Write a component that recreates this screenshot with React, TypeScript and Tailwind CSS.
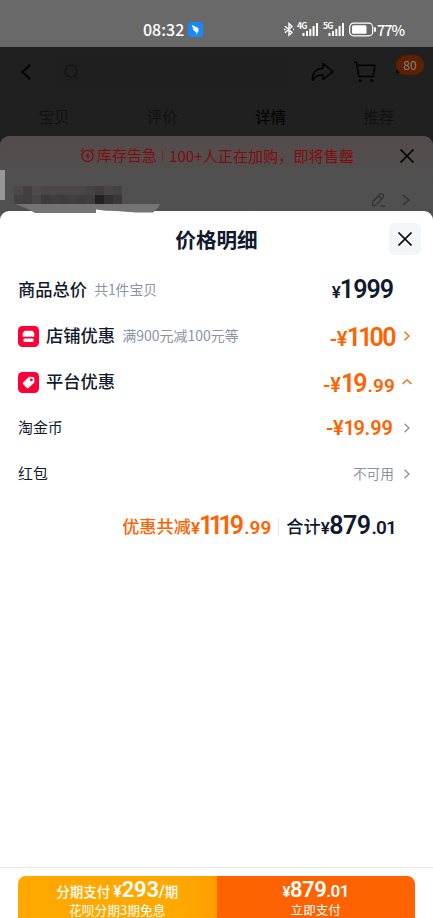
import type { ReactNode } from "react";
import clsx from "clsx";

const TABS = [
  { label: "宝贝", active: false },
  { label: "评价", active: false },
  { label: "详情", active: true },
  { label: "推荐", active: false },
];

// Censored recipient name, one colour per block
const MOSAIC = [
  ["#4b494a", "#434041", "#4d4b4c", "#494748", "#494748", "#494748", "#494748", "#494748", "#464344", "#413e3f", "#474546", "#444243"],
  ["#434142", "#413f40", "#494748", "#3d3b3c", "#3f3d3e", "#3d3b3c", "#403e3f", "#3e3c3d", "#403e3f", "#232122", "#333031", "#3b3839"],
];

function Chevron({ className, up }: { className?: string; up?: boolean }) {
  return (
    <svg
      viewBox="0 0 12 12"
      className={clsx("h-3 w-3 shrink-0", className)}
      fill="none"
      stroke="currentColor"
      strokeWidth="1.3"
    >
      <path d={up ? "M1.5 8 6 3.8 10.5 8" : "M3.5 1.7 8 6 3.5 10.3"} />
    </svg>
  );
}

function CloseIcon() {
  return (
    <svg viewBox="0 0 16 16" className="h-4 w-4" fill="none" stroke="currentColor" strokeWidth="1.7">
      <path d="M1.5 1.5 14.5 14.5M14.5 1.5 1.5 14.5" />
    </svg>
  );
}

function Signal({ label }: { label: string }) {
  return (
    <div className="relative h-[15px] w-[21px]">
      <span className="absolute -left-px -top-px text-[8.5px] font-bold leading-[8px] tracking-[-0.8px]">{label}</span>
      <svg viewBox="0 0 21 15" className="h-[15px] w-[21px]" fill="currentColor">
        <rect x="4.500" y="11" width="2" height="3" />
        <rect x="8" y="9" width="2" height="5" />
        <rect x="11.300" y="7" width="2" height="7" />
        <rect x="14.600" y="4" width="2" height="10" />
        <rect x="18" y="1" width="2" height="13" />
      </svg>
    </div>
  );
}

function StatusBar() {
  return (
    <div className="h-[47px] bg-[#696969] text-white">
      <div className="flex h-full items-start pl-[143px] pt-[20px]">
        <span className="w-[43px] text-[16px] font-medium leading-[18px]">08:32</span>
        <svg viewBox="0 0 15 15" className="ml-[2px] mt-[2px] h-[15px] w-[15px]">
          <rect width="15" height="15" rx="3" fill="#1689fb" />
          <path d="M4 3c2 1 4.500 1.800 6 3 .8.700.4 1.500 0 2.200h1.200L7.600 13l.7-3H6.800l.5-1C5.500 8.500 4.800 7.500 4.700 6.700L6 6.900C4.600 6 4 4.500 4 3z" fill="#fff" />
        </svg>
        <div className="ml-[81px] flex pt-[2px]">
          <svg viewBox="0 0 10 15" className="h-[15px] w-[10px]" fill="none" stroke="currentColor" strokeWidth="1.4">
            <path d="M1 4.300 8 10.500 5 13.200V1.500L8 4.400 1 10.700M9 7.500h1M0 7.500h1.500" />
          </svg>
          <div className="ml-[4px]">
            <Signal label="4G" />
          </div>
          <div className="ml-[5px]">
            <Signal label="5G" />
          </div>
          <svg viewBox="0 0 28 15" className="ml-[4px] h-[15px] w-[28px]">
            <rect x=".7" y="1.200" width="23" height="12.600" rx="3.800" fill="none" stroke="#fff" strokeWidth="1.200" />
            <rect x="3" y="3.300" width="14.500" height="8.400" rx="1.500" fill="#fff" />
            <path d="M26 6v3" stroke="#fff" strokeWidth="1.800" strokeLinecap="round" />
          </svg>
        </div>
        <span className="text-[14.5px] font-medium leading-[19px] tracking-[-1px]">77%</span>
      </div>
    </div>
  );
}

function ProductHeader() {
  return (
    <div className="h-[98px] bg-[#202020] text-black">
      <div className="flex h-[50px] items-center">
        <svg viewBox="0 0 10 16" className="ml-[21px] h-4 w-[10px]" fill="none" stroke="currentColor" strokeWidth="1.8">
          <path d="M9 1 1.500 8 9 15" />
        </svg>
        <div className="ml-[23px] flex h-[34px] w-[238px] items-center rounded-md bg-[#1f1f1f] pl-[10px] text-[#111]">
          <svg viewBox="0 0 16 16" className="h-4 w-4" fill="none" stroke="currentColor" strokeWidth="1.100">
            <circle cx="7" cy="7" r="6" />
            <path d="m11.500 11.500 3 3.300" />
          </svg>
        </div>
        <svg viewBox="0 0 24 20" className="ml-[18px] h-5 w-6" fill="none" stroke="currentColor" strokeWidth="1.500" strokeLinejoin="round">
          <path d="M13 1.500 23 9.700 13 17.500v-4.600C8 12.700 4.600 14.500 2.500 18.300 1.500 11.500 6 6.500 13 6.300z" />
        </svg>
        <svg viewBox="0 0 23 22" className="ml-[20px] h-[22px] w-[22px]" fill="none" stroke="currentColor" strokeWidth="1.500" strokeLinejoin="round">
          <path d="M0 .8h2.700L5 15.800h15L21.800 4H3.200" />
          <circle cx="6.500" cy="20" r="1.500" fill="currentColor" stroke="none" />
          <circle cx="18.500" cy="20" r="1.500" fill="currentColor" stroke="none" />
        </svg>
        <div className="relative ml-[20px] h-5 w-7">
          <span className="absolute left-0 top-[8px] h-[3px] w-[3px] rounded-full bg-black" />
          <span className="absolute -top-[7px] left-0 flex h-[20px] w-[28px] items-center justify-center rounded-full bg-[#5e2000] text-[12px] text-[#858080]">
            80
          </span>
        </div>
      </div>
      <div className="grid h-[40px] grid-cols-4">
        {TABS.map((tab) => (
          <span
            key={tab.label}
            className={clsx("text-center text-[15.5px] leading-[39px]", tab.active ? "text-black" : "text-[#111]")}
          >
            {tab.label}
          </span>
        ))}
      </div>
    </div>
  );
}

function OrderSheet() {
  return (
    <div className="relative -mt-[9px] h-[90px] rounded-t-[9px] bg-linear-to-b from-[#554b4b] from-0% to-[#505050] to-50%">
      <div className="flex h-[39px] items-center pl-[80px] text-[#850b0b]">
        <svg viewBox="0 0 15 15" className="h-[15px] w-[15px]" fill="none" stroke="currentColor" strokeWidth="1.300">
          <circle cx="7.500" cy="8" r="5.600" />
          <path d="M1 3.300 3.500 1M14 3.300 11.500 1" />
          <path d="M8.300 4.500 5.500 8.500h2v3l2.300-3.800H8.300z" fill="currentColor" stroke="none" />
        </svg>
        <span className="ml-[2px] text-[15px]">库存告急</span>
        <span className="ml-[5px] h-[11px] w-px bg-[#7b2525]" />
        <span className="ml-[6px] w-[230px] text-[15.15px]">100+人正在加购，即将售罄</span>
        <span className="text-black">
          <CloseIcon />
        </span>
      </div>
      <div className="flex h-[49px] items-center justify-end gap-[16px] pr-[23px] text-[#303030]">
        <svg viewBox="0 0 14 14" className="h-[14px] w-[14px]" fill="none" stroke="currentColor" strokeWidth="1.200" strokeLinejoin="round">
          <path d="M1.500 8 7.500 1.500c1-1 2.400-.8 3.300.1s1 2 .1 3L5 11.200c-1 1.200-3.800 1.800-4.400 1.200S.7 9 1.500 8zM6.300 2.800l3.600 3.400M8 13.100h5.500" />
        </svg>
        <svg viewBox="0 0 8 12" className="h-3 w-2" fill="none" stroke="currentColor" strokeWidth="1.300">
          <path d="m1 1 6 5-6 5" />
        </svg>
      </div>
      <span className="absolute left-0 top-[34px] h-[30px] w-[5px] bg-[#989898]" />
      <div className="absolute left-[14px] top-[50px]">
        {MOSAIC.map((row, y) => (
          <div key={y} className="flex">
            {row.map((color, x) => (
              <span key={x} className="h-[9px] w-[9px]" style={{ backgroundColor: color }} />
            ))}
          </div>
        ))}
      </div>
    </div>
  );
}

type PriceProps = {
  children: ReactNode;
  className: string;
};

function Price({ children, className }: PriceProps) {
  return (
    <span className={clsx("whitespace-nowrap font-['Roboto','Noto_Sans_CJK_SC',sans-serif] font-semibold", className)}>
      {children}
    </span>
  );
}

function Row({ label, right }: { label: ReactNode; right: ReactNode }) {
  return (
    <div className="flex h-[46px] items-center justify-between pl-[18px] pr-[20px]">
      <div className="flex items-center">{label}</div>
      <div className="flex items-center">{right}</div>
    </div>
  );
}

function RowTitle({ children }: { children: ReactNode }) {
  return <span className="pb-[2px] text-[17.3px] font-medium">{children}</span>;
}

function ShopIcon() {
  return (
    <svg viewBox="0 0 21 21" className="mr-[7px] h-[21px] w-[21px]">
      <rect width="21" height="21" rx="4.500" fill="#ff0036" />
      <path d="M6.500 4.700h8l1.800 2.500v3q-1.400 1.600-2.900 0-1.400 1.600-2.900 0-1.400 1.600-2.900 0-1.400 1.600-2.900 0v-3z" fill="#fff" />
      <path d="M5.500 12.500q1.200.5 2.200-.2 1.300.9 2.800 0 1.500.9 2.800 0 1 .7 2.200.2v2.300q0 1.200-1.200 1.200H6.700q-1.200 0-1.200-1.200z" fill="#fff" />
    </svg>
  );
}

function TagIcon() {
  return (
    <svg viewBox="0 0 21 21" className="mr-[7px] h-[21px] w-[21px]">
      <rect width="21" height="21" rx="4.500" fill="#ff0036" />
      <path d="m5.200 10.500 5.200-5.300q.5-.4 1.200-.4l3.600.2q1 .1 1 1l.2 3.700q0 .7-.5 1.200L10.500 16q-.8.7-1.600 0l-3.700-3.800q-.8-.9 0-1.700z" fill="#fff" />
      <circle cx="13.300" cy="7.900" r="1.400" fill="#ff0036" />
    </svg>
  );
}

function PriceDialog() {
  return (
    <div className="relative -mt-[15px] flex flex-1 flex-col rounded-t-[9px] bg-white text-[#111a2c]">
      {/* leftover of the censored name, overlapping the dialog edge */}
      <svg viewBox="0 0 146 10" className="absolute -top-[7px] left-[15px] h-[10px] w-[146px]">
        <path d="M0 0h145q-1 4-7 8.500H118l-16-.5-20-2V9H20Q12 4 0 0z" fill="#757373" />
        <path d="M81 5.500q10 1.500 21 1.500l17 1.500v1.500H81z" fill="#fff" />
      </svg>
      <div className="relative flex h-[56px] items-center justify-center">
        <h1 className="text-[20.6px] font-bold">价格明细</h1>
        <button className="absolute right-[12px] top-[12px] flex h-[32px] w-[32px] items-center justify-center rounded-md bg-[#f3f6f9] text-black">
          <CloseIcon />
        </button>
      </div>

      <Row
        label={
          <>
            <RowTitle>商品总价</RowTitle>
            <span className="ml-[7px] pb-[2px] text-[13.8px] text-[#8b94a3]">共1件宝贝</span>
          </>
        }
        right={
          <Price className="mr-[20px] text-[25px] tracking-[-1px]">
            <span className="text-[17px]">¥</span>1999
          </Price>
        }
      />
      <Row
        label={
          <>
            <ShopIcon />
            <RowTitle>店铺优惠</RowTitle>
            <span className="ml-[7px] pb-px text-[14px] text-[#8b94a3]">满900元减100元等</span>
          </>
        }
        right={
          <>
            <Price className="mr-[6px] pt-[3px] text-[25px] tracking-[-1.5px] text-[#ff6200]">
              <span className="text-[20px] tracking-[-0.5px]">-¥</span>
              <span className="tracking-[-3px]">11</span>00
            </Price>
            <Chevron className="text-[#ff6200]" />
          </>
        }
      />
      <Row
        label={
          <>
            <TagIcon />
            <RowTitle>平台优惠</RowTitle>
          </>
        }
        right={
          <>
            <Price className="mr-[6px] pt-[3px] text-[25px] tracking-[-2px] text-[#ff6200]">
              <span className="text-[20px] tracking-[0px]">-¥</span>19<span className="ml-[2px] text-[19px] tracking-[0.1px]">.99</span>
            </Price>
            <Chevron up className="text-[#ff6200]" />
          </>
        }
      />
      <Row
        label={<span className="pb-px text-[14.9px]">淘金币</span>}
        right={
          <>
            <Price className="mr-[8px] text-[20px] tracking-[-0.2px] text-[#ff6200]">
              -¥<span className="tracking-[-1.5px]">19</span>
              <span className="ml-[1px] tracking-[0px]">.99</span>
            </Price>
            <Chevron className="text-[#8b8f97]" />
          </>
        }
      />
      <Row
        label={<span className="pb-px text-[14.9px]">红包</span>}
        right={
          <>
            <span className="mr-[7px] pb-px text-[13.7px] text-[#8b94a3]">不可用</span>
            <Chevron className="text-[#8b8f97]" />
          </>
        }
      />

      <div className="flex h-[58px] items-center justify-end pr-[37px]">
        <span className="text-[17.2px] font-medium text-[#ff6200]">优惠共减</span>
        <Price className="text-[25px] tracking-[-1px] text-[#ff6200]">
          <span className="text-[17px]">¥</span>
          <span className="tracking-[-4.5px]">11</span>
          <span className="tracking-[-3px]">1</span>9<span className="ml-[1px] text-[19px] tracking-[0px]">.99</span>
        </Price>
        <span className="mx-[7px] h-[17px] w-px bg-[#e3e5e8]" />
        <span className="text-[17.2px] font-medium">合计</span>
        <Price className="text-[25px] tracking-[-0.5px]">
          <span className="text-[17px]">¥</span>879
          <span className="ml-[1px] text-[19px] tracking-[-0.9px]">.01</span>
        </Price>
      </div>
    </div>
  );
}

function PayBar() {
  return (
    <div className="h-[51px] shrink-0 overflow-hidden border-t border-[#e9e9e9] bg-white px-[18px] pt-[8px] text-white">
      <div className="grid h-[50px] grid-cols-2 overflow-hidden rounded-lg">
        <button className="flex flex-col items-center bg-linear-to-r from-[#ffa900] from-80% to-[#ff9d00]">
          <span className="h-[28px] whitespace-nowrap text-[13.5px] font-medium leading-[28px]">
            分期支付 <Price className="text-[16px]">¥</Price>
            <Price className="text-[22px] tracking-[-0.3px]">293</Price>
            <Price className="text-[16px]">/</Price>期
          </span>
          <span className="text-[12.8px] leading-[12px]">花呗分期3期免息</span>
        </button>
        <button className="flex flex-col items-center bg-[#ff6200]">
          <Price className="h-[28px] text-[22px] leading-[28px] tracking-[-0.5px]">
            <span className="text-[15px]">¥</span>879<span className="text-[17px]">.01</span>
          </Price>
          <span className="text-[12.5px] leading-[12px]">立即支付</span>
        </button>
      </div>
    </div>
  );
}

export default function App() {
  return (
    <div className="flex h-[918px] w-[433px] flex-col overflow-hidden bg-white font-['Noto_Sans_CJK_SC',sans-serif]">
      <StatusBar />
      <ProductHeader />
      <OrderSheet />
      <PriceDialog />
      <PayBar />
    </div>
  );
}
